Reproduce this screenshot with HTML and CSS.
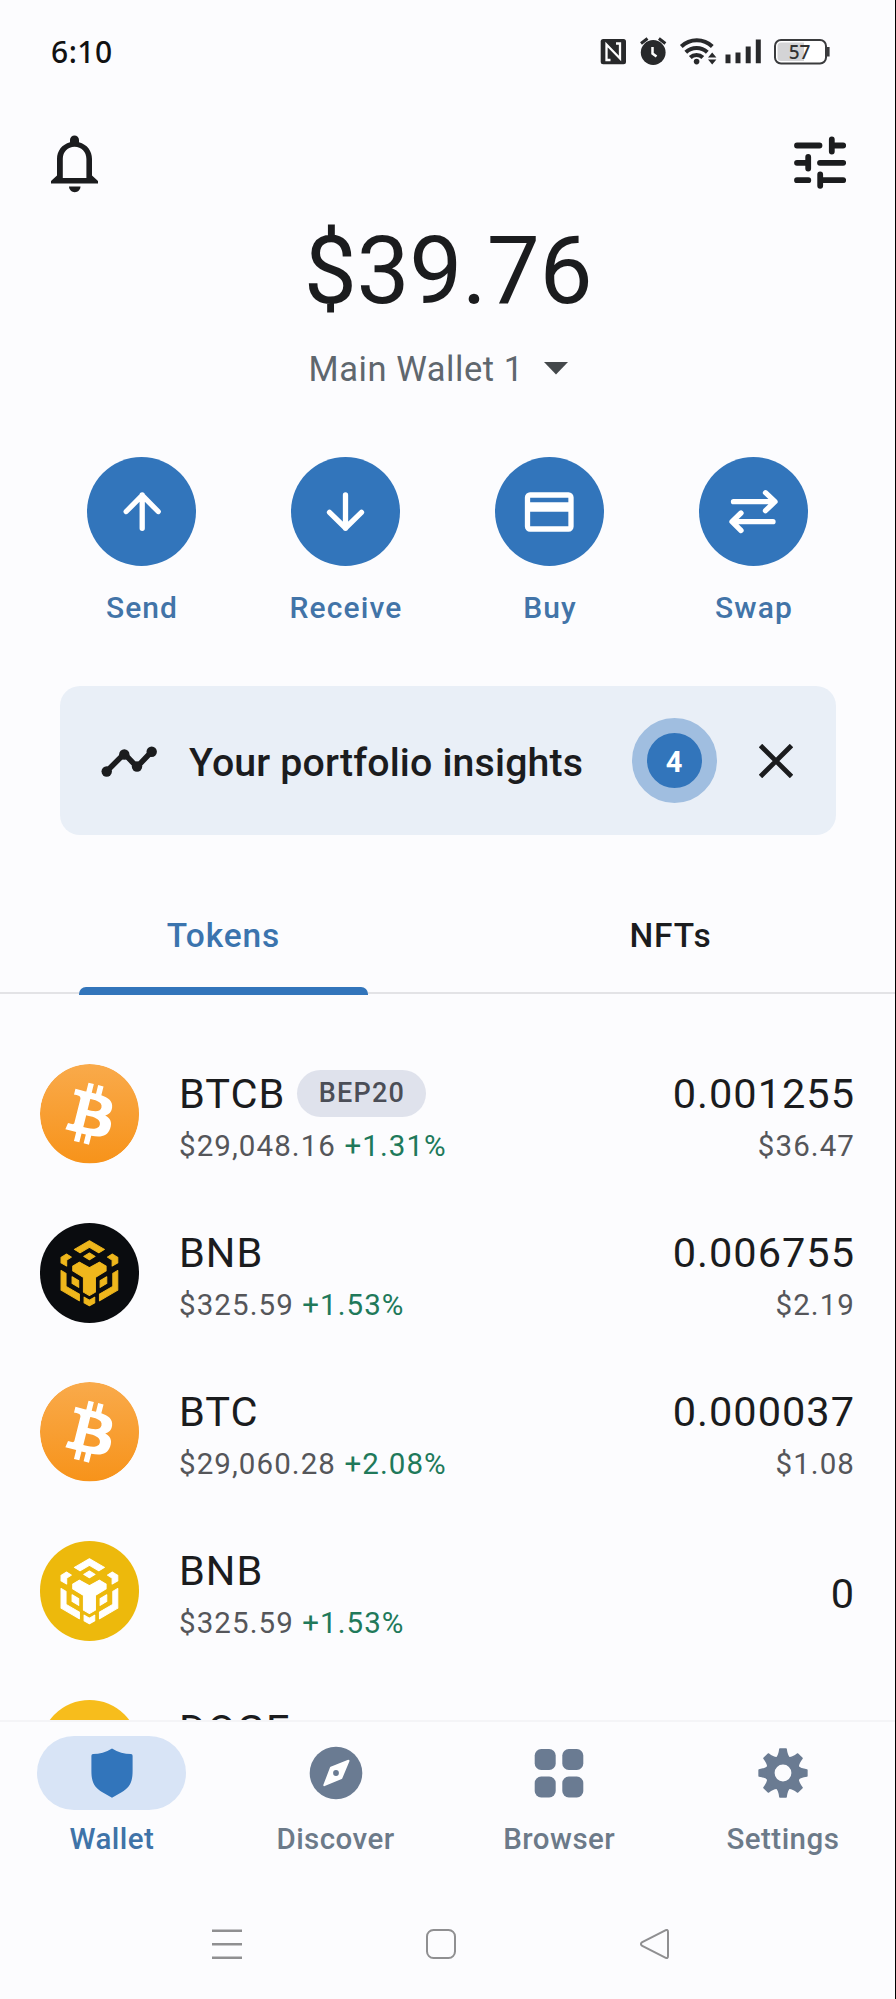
FILE: index.html
```html
<!DOCTYPE html>
<html lang="en">
<head>
<meta charset="utf-8">
<title>Wallet</title>
<link rel="stylesheet" href="styles.css">
</head>
<body>
<svg class="defs" width="0" height="0">
  <defs>
    <linearGradient id="orange" x1="0" y1="0" x2="0" y2="1"><stop offset="0" stop-color="#f9aa4b"/><stop offset="1" stop-color="#f7931a"/></linearGradient>
    <symbol id="btc" viewBox="0 0 32 32">
      <circle cx="16" cy="16" r="16" fill="url(#orange)"/>
      <path fill="#fff" d="M23.189 14.02c.314-2.096-1.283-3.223-3.465-3.975l.708-2.84-1.728-.43-.69 2.765c-.454-.114-.92-.22-1.385-.326l.695-2.783L15.596 6l-.708 2.839c-.376-.086-.746-.17-1.104-.26l.002-.009-2.384-.595-.46 1.846s1.283.294 1.256.312c.7.175.826.638.805 1.006l-.806 3.235c.048.012.11.03.18.057l-.183-.045-1.13 4.532c-.086.212-.303.531-.793.41.018.025-1.256-.313-1.256-.313l-.858 1.978 2.25.561c.418.105.828.215 1.231.318l-.715 2.872 1.727.43.708-2.84c.472.127.93.245 1.378.357l-.706 2.828 1.728.43.715-2.866c2.948.558 5.164.333 6.097-2.333.752-2.146-.037-3.385-1.588-4.192 1.13-.26 1.98-1.003 2.207-2.538zm-3.95 5.538c-.533 2.147-4.148.986-5.32.695l.95-3.805c1.172.293 4.929.872 4.37 3.11zm.535-5.569c-.487 1.953-3.495.96-4.47.717l.86-3.45c.975.243 4.118.696 3.61 2.733z"/>
    </symbol>
    <symbol id="bnb" viewBox="0 0 298 298">
      <g fill="currentColor" stroke="currentColor" stroke-width="3" stroke-linejoin="round">
        <path d="M148 53l45 26-17 10-28-16-28 16-17-10z"/>
        <path d="M148 90l17 10-17 10-17-10z"/>
        <path d="M63 103l17-10 14 9-14 9v18l-17-10z"/>
        <path d="M233 103l-17-10-14 9 14 9v18l17-10z"/>
        <path d="M63 142l15 9v39l40 23v20l-55-32z"/>
        <path d="M233 142l-15 9v39l-40 23v20l55-32z"/>
        <path d="M96 161l20 12v20l-20-12z"/>
        <path d="M200 161l-20 12v20l20-12z"/>
        <path d="M132 222l16 9 16-9v17l-16 9-16-9z"/>
        <path d="M118 117l30 17 30-17 20 12v14l-32 20v44l-18 10-18-10v-44l-32-20v-14z"/>
      </g>
    </symbol>
  </defs>
</svg>
<div class="phone">
  <header class="status">
    <span class="time">6:10</span>
    <svg class="status-icons" width="232" height="30" viewBox="600 37 232 30">
      <rect x="600.7" y="39" width="25.3" height="25.3" rx="2.5" fill="#28292b"/>
      <path d="M610.500 60H606.500V44.500L620 58.500V43.500H616" fill="none" stroke="#fff" stroke-width="2.300"/>
      <circle cx="653.200" cy="52.500" r="12.400" fill="#28292b"/>
      <path d="M641 43.500l6.500-5M665.400 43.500l-6.500-5" stroke="#28292b" stroke-width="3" fill="none"/>
      <path d="M652.500 47v6.500l4 3" stroke="#fff" stroke-width="2.500" fill="none"/>
      <g fill="none" stroke="#28292b" stroke-width="4">
        <path d="M681.300 46.500a22.500 22.500 0 0 1 31 0"/>
        <path d="M685.800 52.300a15.500 15.500 0 0 1 21.500 0"/>
        <path d="M690.300 57.500a9 9 0 0 1 12.500 0"/>
      </g>
      <circle cx="696.600" cy="61.600" r="2.800" fill="#28292b"/>
      <path d="M708 57.500l4.200-5 4.200 5zM708 59.500l4.200 5 4.200-5z" fill="#28292b"/>
      <path d="M728 54.500V63.300M738 52.500V63.300M748.200 46.500V63.300M758.300 39.500V63.300" stroke="#28292b" stroke-width="5"/>
      <rect x="775" y="40" width="51" height="23.500" rx="6" fill="#fff" stroke="#3a3b3d" stroke-width="2"/>
      <path d="M781 42.500h23v18.500h-23q-3.500 0-3.500-3.500v-11.500q0-3.500 3.500-3.500z" fill="#d4d4d6"/>
      <path d="M828.300 47v9.500" stroke="#3a3b3d" stroke-width="2.600"/>
      <text x="799.500" y="58.600" text-anchor="middle" class="batt">57</text>
    </svg>
  </header>

  <div class="topbar">
    <svg width="47" height="58" viewBox="51 135 47 58">
      <path fill="#1b1c1e" fill-rule="evenodd" d="M74.500 135.500a4.500 4.500 0 0 1 4.500 4.500v2.300c8 2.200 13 8.500 13 16.700v16.500l6 5.500v2.500h-47v-2.500l6-5.500v-16.500c0-8.200 5-14.500 13-16.700v-2.300a4.500 4.500 0 0 1 4.500-4.500zM62.800 178h23.600v-19c0-7-5-12.200-11.800-12.200s-11.800 5.200-11.800 12.200z"/>
      <path fill="#1b1c1e" d="M69 186.500h11.500c0 3-2.500 5.700-5.700 5.700s-5.800-2.700-5.800-5.700z"/>
    </svg>
    <svg class="sliders" width="52" height="53" viewBox="794.500 136.500 52 53">
      <path fill="none" stroke="#1b1c1e" stroke-width="5.800" stroke-linecap="round" d="M797.500 146H820M832.300 140v12M833 146h10.700M797.500 163.300H808M808.700 157.500v11.500M820.500 163.300h23.200M797.500 180.700h11.300M820.700 175v11.300M821 180.700h22.700"/>
    </svg>
  </div>

  <div class="balance">$39.76</div>
  <div class="wallet-name"><span>Main Wallet 1</span><svg width="24" height="13" viewBox="0 0 24 13"><path fill="#44484b" d="M0 0h24L12 12.500z"/></svg></div>

  <div class="actions">
    <div class="action"><div class="disc"><svg width="109" height="109" viewBox="0 0 109 109"><path d="M55.200 71.300V38M39.200 54.500L55.200 38.300l16 16.200"/></svg></div><span>Send</span></div>
    <div class="action"><div class="disc"><svg width="109" height="109" viewBox="0 0 109 109"><path d="M54.500 38V71.300M38.500 55.300L54.500 71l16-15.700"/></svg></div><span>Receive</span></div>
    <div class="action"><div class="disc"><svg width="109" height="109" viewBox="0 0 109 109"><rect x="32.500" y="38" width="43.500" height="34" rx="2.500"/><path class="strip" d="M33 50h43"/></svg></div><span>Buy</span></div>
    <div class="action"><div class="disc"><svg width="109" height="109" viewBox="0 0 109 109"><path d="M34.500 44.700H74M66.500 35.700l9.500 9-9.500 9M74 64.700H34M42 56l-9 8.700L42 73.500"/></svg></div><span>Swap</span></div>
  </div>

  <div class="insights">
    <svg class="trend" width="56" height="32" viewBox="101 744 56 32">
      <path d="M106.500 770.500L124.300 752.700L137 766L151.700 750.500" fill="none" stroke="#1b1c1e" stroke-width="5.500"/>
      <g fill="#1b1c1e"><circle cx="106.700" cy="770.500" r="5.200"/><circle cx="124.300" cy="753.500" r="5.200"/><circle cx="137" cy="765.500" r="5.200"/><circle cx="151.700" cy="750.700" r="5.200"/></g>
    </svg>
    <span class="insights-title">Your portfolio insights</span>
    <span class="count"><b>4</b></span>
    <svg class="close" width="34" height="34" viewBox="0 0 34 34"><path d="M1.500 1.500l31 31M32.500 1.500l-31 31" stroke="#1b1c1e" stroke-width="4.800" fill="none"/></svg>
  </div>

  <div class="tabs">
    <div class="tab active"><span>Tokens</span><i></i></div>
    <div class="tab"><span>NFTs</span></div>
  </div>

  <main class="list">
    <div class="row">
      <svg class="coin"><use href="#btc"/></svg>
      <div class="info"><div class="name">BTCB<span class="tag">BEP20</span></div><div class="sub">$29,048.16 <em>+1.31%</em></div></div>
      <div class="amount"><div class="name">0.001255</div><div class="sub">$36.47</div></div>
    </div>
    <div class="row">
      <svg class="coin dark"><use href="#bnb"/></svg>
      <div class="info"><div class="name">BNB</div><div class="sub">$325.59 <em>+1.53%</em></div></div>
      <div class="amount"><div class="name">0.006755</div><div class="sub">$2.19</div></div>
    </div>
    <div class="row">
      <svg class="coin"><use href="#btc"/></svg>
      <div class="info"><div class="name">BTC</div><div class="sub">$29,060.28 <em>+2.08%</em></div></div>
      <div class="amount"><div class="name">0.000037</div><div class="sub">$1.08</div></div>
    </div>
    <div class="row">
      <svg class="coin gold"><use href="#bnb"/></svg>
      <div class="info"><div class="name">BNB</div><div class="sub">$325.59 <em>+1.53%</em></div></div>
      <div class="amount single"><div class="name">0</div></div>
    </div>
    <div class="row">
      <div class="coin doge"></div>
      <div class="info"><div class="name">DOGE</div></div>
    </div>
  </main>

  <nav class="nav">
    <div class="item on"><div class="pill"><svg width="54" height="54" viewBox="0 0 54 54"><path fill="#3275bb" d="M27 2.500c6 4 12.500 5.500 19 5.600q1.600 0 1.600 1.700v15.200c0 12-3.500 16.500-11 21.300L27 51.800l-9.600-5.500c-7.500-4.800-11-9.300-11-21.300V9.800q0-1.700 1.600-1.700c6.500-.1 13-1.600 19-5.600z"/></svg></div><span>Wallet</span></div>
    <div class="item"><div class="pill"><svg width="54" height="54" viewBox="0 0 54 54"><circle cx="27" cy="27" r="26.300" fill="#6a7b92"/><path fill="#fff" stroke="#fff" stroke-width="2" stroke-linejoin="round" d="M39.500 14.800L22 21.700l-6.700 17.500 17-7.200z"/><circle cx="27" cy="27" r="2.900" fill="#6a7b92"/></svg></div><span>Discover</span></div>
    <div class="item"><div class="pill"><svg width="54" height="54" viewBox="0 0 54 54"><g fill="#6a7b92"><rect x="2.700" y="3" width="21" height="21" rx="6.500"/><rect x="30.300" y="3" width="21" height="21" rx="6.500"/><rect x="2.700" y="30.500" width="21" height="21" rx="6.500"/><rect x="30.300" y="30.500" width="21" height="21" rx="6.500"/></g></svg></div><span>Browser</span></div>
    <div class="item"><div class="pill"><svg width="54" height="54" viewBox="-27 -27 54 54"><g fill="#6a7b92" stroke="#6a7b92" stroke-width="1.500" stroke-linejoin="round"><path id="tooth" d="M-6.500-15Q-4-17-3.100-23.900h6.200Q4-17 6.500-15z"/><use href="#tooth" transform="rotate(45)"/><use href="#tooth" transform="rotate(90)"/><use href="#tooth" transform="rotate(135)"/><use href="#tooth" transform="rotate(180)"/><use href="#tooth" transform="rotate(225)"/><use href="#tooth" transform="rotate(270)"/><use href="#tooth" transform="rotate(315)"/></g><circle r="12.700" fill="none" stroke="#6a7b92" stroke-width="8.600"/></svg></div><span>Settings</span></div>
  </nav>

  <footer class="system">
    <svg width="30" height="30" viewBox="0 0 30 30"><path d="M0 1.700h30M0 15.300h30M0 28.700h30" stroke="#8f8f91" stroke-width="2.400"/></svg>
    <svg width="30" height="30" viewBox="0 0 30 30"><rect x="1" y="1" width="28" height="28" rx="6.500" fill="none" stroke="#8f8f91" stroke-width="2"/></svg>
    <svg width="30" height="30" viewBox="0 0 30 30"><path d="M25.300 1.300Q28 0 28 3v24q0 3-2.700 1.700L2.300 17q-2.700-2 0-4z" fill="none" stroke="#8f8f91" stroke-width="2"/></svg>
  </footer>
</div>
</body>
</html>
```
FILE: styles.css
```css
* { box-sizing: border-box; }
body { margin: 0; background: #fcfcfe; font-family: Roboto, "Liberation Sans", sans-serif; color: #1b1c1e; }
svg { display: block; flex: none; }
.defs { position: absolute; }
.phone { width: 896px; height: 1999px; border-right: 1px solid #000; display: flex; flex-direction: column; overflow: hidden; white-space: nowrap; }

.status { height: 104px; padding: 32px 63px 0 51px; display: flex; justify-content: space-between; align-items: flex-start; }
.time { font: 500 30px/40px "Noto Sans", sans-serif; letter-spacing: 0.500px; color: #111; }
.status-icons { margin-top: 5px; }
.batt { font: 500 19px "Noto Sans", sans-serif; fill: #333; }

.topbar { height: 123px; padding: 31px 49px 0 51px; display: flex; justify-content: space-between; align-items: flex-start; }
.sliders { margin-top: 1px; }

.balance { height: 111px; padding-left: 1px; font-size: 94.500px; line-height: 88px; letter-spacing: -0.300px; text-align: center; }
.wallet-name { height: 118.500px; display: flex; padding: 10px 0 0 308.500px; font-size: 34.500px; line-height: 42px; letter-spacing: 0.550px; color: #5f676e; }
.wallet-name svg { margin-top: 14px; }
.wallet-name span { width: 235.500px; }

.actions { height: 229.500px; padding-left: 39.500px; display: flex; }
.action { width: 204px; display: flex; flex-direction: column; align-items: center; }
.disc { width: 109.500px; height: 109.500px; border-radius: 50%; background: #3275bb; }
.disc svg { fill: none; stroke: #fff; stroke-width: 5.300px; stroke-linecap: round; stroke-linejoin: round; }
.disc .strip { stroke-width: 9.500px; stroke-linecap: butt; }
.action span { margin: 24px 0 0 1px; font-size: 30px; line-height: 36px; font-weight: 500; letter-spacing: 1.100px; color: #4274a8; }

.insights { width: 776px; height: 149px; margin-left: 59.500px; border-radius: 20px; background: #e9eff7; display: flex; align-items: center; padding: 0 43px 0 41.500px; }
.insights-title { margin-left: 32px; width: 442.500px; font-size: 39.300px; line-height: 46px; padding-top: 4px; font-weight: 500; letter-spacing: 0.150px; }
.count { flex: none; width: 85px; height: 85px; border-radius: 50%; border: 15px solid #a0bee0; background: #3275bb; color: #fff; font-size: 29px; display: flex; align-items: center; justify-content: center; padding-top: 3px; }
.close { margin-left: auto; }

.tabs { height: 159px; border-bottom: 2px solid #e3e3e6; display: flex; font-size: 33.500px; font-weight: 500; letter-spacing: 0.900px; }
.tab { width: 447px; height: 100%; padding-top: 81px; display: flex; flex-direction: column; align-items: center; line-height: 40px; }
.tab.active { color: #3b74ae; }
.tab i { width: 289px; height: 8px; margin-top: 31px; flex: none; border-radius: 7px 7px 0 0; background: #3275bb; }

.list { height: 725.500px; padding: 70px 40px 0 39.500px; overflow: hidden; }
.row { height: 159.100px; display: flex; }
.coin { width: 99.500px; height: 99.500px; flex: none; border-radius: 50%; }
.coin.dark { background: #0a0c0f; color: #efb71c; }
.coin.gold { background: #edb90c; color: #fff; }
.coin.doge { background: #f7bd1c; }
.info { margin-left: 40px; flex: 1; }
.name { height: 59px; font-size: 41.500px; line-height: 59px; letter-spacing: 1px; display: flex; align-items: center; }
.sub { height: 46px; font-size: 29.500px; line-height: 47px; letter-spacing: 1.080px; color: #55565a; }
.sub em { font-style: normal; color: #20795a; }
.tag { margin-left: 12px; width: 129px; height: 46.500px; border-radius: 24px; background: #dfe2ec; color: #4b4e57; font-size: 27px; line-height: 47px; font-weight: 500; letter-spacing: 1.200px; text-align: center; }
.amount { text-align: right; display: flex; flex-direction: column; align-items: flex-end; }
.amount.single { padding-top: 23px; }

.nav { height: 169px; border-top: 2px solid #f4f4f7; padding-top: 14px; display: flex; position: relative; }
.item { width: 223.700px; display: flex; flex-direction: column; align-items: center; font-size: 29.500px; font-weight: 500; line-height: 36px; color: #6c7a89; letter-spacing: 0.450px; }
.item.on { color: #3f73a8; }
.pill { width: 149px; height: 74.500px; border-radius: 38px; display: flex; align-items: center; justify-content: center; margin-bottom: 11px; }
.on .pill { background: #d8e4f6; }

.system { padding: 40.500px 0 0 212px; display: flex; gap: 184px; }
```
